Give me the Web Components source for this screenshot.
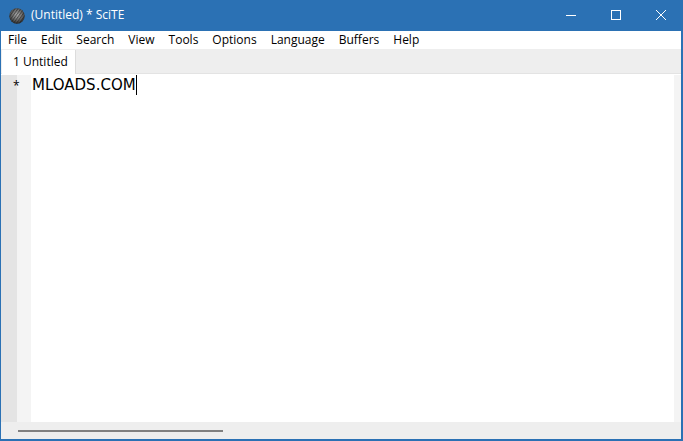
<!DOCTYPE html>
<html><head><meta charset="utf-8"><style>
html,body{margin:0;padding:0;height:100%;overflow:hidden}
body{font-family:"Open Sans","Noto Sans",sans-serif}
</style></head><body>
<scite-window>
  <title-bar slot="title">(Untitled) * SciTE</title-bar>
  <menu-bar slot="menu"><menu-item>File</menu-item><menu-item>Edit</menu-item><menu-item>Search</menu-item><menu-item>View</menu-item><menu-item>Tools</menu-item><menu-item>Options</menu-item><menu-item>Language</menu-item><menu-item>Buffers</menu-item><menu-item>Help</menu-item></menu-bar>
  <tab-strip slot="tabs">1 Untitled *</tab-strip>
  <editor-pane slot="editor">MLOADS.COM</editor-pane>
  <h-scroll slot="scroll"></h-scroll>
</scite-window>
<script>
function def(name, html){
  customElements.define(name, class extends HTMLElement{
    constructor(){super();this.attachShadow({mode:'open'}).innerHTML=html;}
  });
}
def('scite-window',`<style>
:host{display:flex;flex-direction:column;box-sizing:border-box;width:683px;height:441px;border:solid #2b71b4;border-width:0 2px 2px 1px;background:#fff}
</style><slot name="title"></slot><slot name="menu"></slot><slot name="tabs"></slot><slot name="editor"></slot><slot name="scroll"></slot>`);
def('title-bar',`<style>
:host{display:flex;align-items:center;height:31px;margin-left:-1px;margin-right:-2px;background:#2b71b4;color:#fff;font-size:12px;flex:none}
.logo{margin-left:9px;width:16px;height:16px;flex:none}
.t{margin-left:6px;flex:1;position:relative;top:-1px}
.b{width:45px;height:31px;display:flex;align-items:center;justify-content:center;position:relative;top:-1px}
svg{display:block}
</style>
<svg class="logo" viewBox="0 0 16 16"><defs>
<radialGradient id="g" cx=".5" cy=".42" r=".62"><stop offset="0" stop-color="#b8b8b8"/><stop offset=".55" stop-color="#6f6f6f"/><stop offset="1" stop-color="#1c1c1c"/></radialGradient>
<pattern id="p" width="2.4" height="2.4" patternUnits="userSpaceOnUse" patternTransform="rotate(35)"><rect width="1.1" height="2.4" fill="#1e1e1e" opacity=".6"/></pattern></defs>
<circle cx="8" cy="8" r="7.7" fill="url(#g)"/><circle cx="8" cy="8" r="7.7" fill="url(#p)"/></svg>
<span class="t"><slot></slot></span>
<span class="b"><svg width="10" height="10"><path d="M0 5.5H10" stroke="#fff" fill="none"/></svg></span>
<span class="b"><svg width="10" height="10"><rect x=".5" y=".5" width="9" height="9" stroke="#fff" fill="none"/></svg></span>
<span class="b"><svg width="10" height="10"><path d="M0 0L10 10M10 0L0 10" stroke="#fff" fill="none"/></svg></span>`);
def('menu-bar',`<style>
:host{display:flex;align-items:center;height:18px;padding-left:0;background:#fff;flex:none;font-size:12px;color:#000}
</style><slot></slot>`);
def('menu-item',`<style>
:host{display:block;padding:0 7px;line-height:18px}
</style><slot></slot>`);
def('tab-strip',`<style>
:host{display:flex;align-items:flex-end;height:24px;background:#eee;flex:none;font-size:12px;color:#000;border-bottom:1px solid #e3e3e3;box-sizing:content-box}
.tab{box-sizing:border-box;height:24px;margin-left:1px;width:74px;background:#fff;border-right:1px solid #dcdcdc;padding-left:11px;line-height:24px;position:relative;top:1px}
</style><div class="tab"><slot></slot></div>`);
def('editor-pane',`<style>
:host{display:flex;flex:1;min-height:0;background:#fff;margin-top:1px}
.a{width:16px;background:#e4e4e4;flex:none}
.b{width:14px;background:#f4f4f4;flex:none}
.c{flex:1;padding-left:1px;font:15px/20px "DejaVu Sans",sans-serif;color:#000}
.line{display:inline-block;height:20px;position:relative}
.caret{display:inline-block;width:1px;height:20px;background:#000;vertical-align:top}
.d{width:7px;background:#f4f4f4;flex:none}
</style><div class="a"></div><div class="b"></div><div class="c"><span class="line"><slot></slot><span class="caret"></span></span></div><div class="d"></div>`);
def('h-scroll',`<style>
:host{display:flex;align-items:center;height:17px;background:#eee;flex:none}
.t{margin-left:17px;width:205px;height:2px;background:#808080}
</style><div class="t"></div>`);
</script></body></html>
